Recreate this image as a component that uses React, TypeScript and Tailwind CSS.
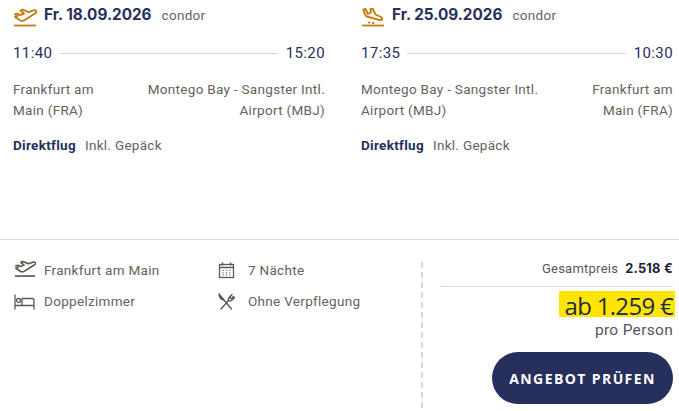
const PlaneUp = ({ className, strokeWidth = 1.5 }: { className: string; strokeWidth?: number }) => (
  <svg className={className} viewBox="0 0 24 24" fill="none" stroke="currentColor" strokeWidth={strokeWidth} strokeLinejoin="round" strokeLinecap="round">
    <path d="M2 6.500l2-.8 3 1.400 4-1.600-3.500-3 2.200-.8 6 2.400 4.800-1.700c1.600-.5 2.800.1 3 1 .2.900-.6 1.700-2 2.300L11 12.500c-1.700.6-3 .5-4-.2L2 9l2.500-1" />
    <path d="M1 17.500h22" strokeWidth={1.8} strokeLinecap="butt" />
  </svg>
);

const PlaneDown = ({ className }: { className: string }) => (
  <svg className={className} viewBox="0 0 24 24" fill="none" stroke="currentColor" strokeWidth={1.9} strokeLinejoin="round" strokeLinecap="round">
    <path d="M2.500 1.500l2-.5 2.500 5 3-1.500-.5-3.500 2-.5 3 6 4.500 2c1.500.7 2.500 2 2 3-.4.800-1.500.8-3 .4L6 8.500c-1-.3-1.500-.8-1.800-1.500L2.500 1.500z" />
    <path d="M1 17.500h22" strokeWidth={1.8} strokeLinecap="butt" />
    <path d="M8 14.500h.5M12 15h.5" />
  </svg>
);

const Calendar = () => (
  <svg className="h-[17px] w-[17px]" viewBox="0 0 17 17" fill="none" stroke="#5c5852" strokeWidth={1.3}>
    <rect x="1.500" y="2.500" width="14" height="13" />
    <path d="M1.500 5.500h14M4.500 .5v3M12.500 .5v3" strokeWidth={1.5} />
    <path d="M4.500 8.500h1.200M7.900 8.500h1.200M11.300 8.500h1.200M4.500 10.800h1.200M7.900 10.800h1.200M11.300 10.800h1.200M4.500 13h1.200M7.900 13h1.200M11.300 13h1.200" strokeWidth={1} />
  </svg>
);

const Bed = () => (
  <svg className="h-[16px] w-[21px]" viewBox="0 0 21 16" fill="none" stroke="#5c5852" strokeWidth={1.3}>
    <path d="M1 .5v15M1 11.500h19M20 15.500V6c0-1-.7-1.500-1.500-1.500H8v7" />
    <circle cx="4.500" cy="6.500" r="2" />
  </svg>
);

const Cutlery = () => (
  <svg className="h-[17px] w-[18px]" viewBox="0 0 18 17" fill="none" stroke="#5c5852" strokeWidth={1.4} strokeLinecap="round" strokeLinejoin="round">
    <path d="M1 1l12.500 15M1 1c0 3 2 5.500 5.500 6.500" />
    <path d="M3 16l7.500-8.500M10.500 7.500c-1-1.500.5-3 1.500-4l2-2M10.500 7.500c1.500 1 3 0 4-1l2-2M13 2.500L11.800 5M15.500 3.500l-2.300 2.300" />
  </svg>
);

function Leg({ date, icon, dep, arr, from, to }: { date: string; icon: React.ReactNode; dep: string; arr: string; from: string[]; to: string[] }) {
  return (
    <div className="flex-1">
      <div className="flex h-[30px] items-center">
        <div className="mt-[9px] w-[31px] text-[#c27c12]">{icon}</div>
        <span className="font-['Inter',sans-serif] text-[15.300px] font-bold text-[#27305c]">{date}</span>
        <span className="ml-[10px] text-[13.500px] tracking-[0.3px] text-[#66625c]">condor</span>
      </div>
      <div className="mt-[13px] flex h-[20px] items-center text-[15px] tracking-[0.4px] text-[#27305c]">
        <span>{dep}</span>
        <div className="ml-[7px] mr-[8px] h-px flex-1 bg-[#d8d8dc]" />
        <span>{arr}</span>
      </div>
      <div className="mt-[16px] flex justify-between text-[13.500px] leading-[21px] tracking-[0.3px] text-[#66625c]">
        <div>{from.map((l) => <div key={l}>{l}</div>)}</div>
        <div className="text-right">{to.map((l) => <div key={l}>{l}</div>)}</div>
      </div>
      <div className="mt-[14px] flex h-[20px] items-center text-[13.500px] tracking-[0.3px]">
        <span className="font-bold text-[#27305c]">Direktflug</span>
        <span className="ml-[9px] text-[#66625c]">Inkl. Gepäck</span>
      </div>
    </div>
  );
}

export default function App() {
  return (
    <div className="h-[411px] w-[679px] overflow-hidden bg-white font-['Roboto',sans-serif]">
      <div className="flex h-[239px] gap-[36px] pl-[13px] pr-[6px]">
        <Leg
          date="Fr. 18.09.2026"
          icon={<PlaneUp className="h-[24px] w-[24px]" strokeWidth={1.9} />}
          dep="11:40"
          arr="15:20"
          from={["Frankfurt am", "Main (FRA)"]}
          to={["Montego Bay - Sangster Intl.", "Airport (MBJ)"]}
        />
        <Leg
          date="Fr. 25.09.2026"
          icon={<PlaneDown className="h-[24px] w-[24px]" />}
          dep="17:35"
          arr="10:30"
          from={["Montego Bay - Sangster Intl.", "Airport (MBJ)"]}
          to={["Frankfurt am", "Main (FRA)"]}
        />
      </div>
      <div className="flex h-[172px] border-t border-[#dcdcdc] pl-[14px] pr-[6px]">
        <div className="mt-[15px] grid h-[62px] w-[407px] grid-cols-[204px_1fr] text-[13.500px] tracking-[0.3px] text-[#66625c]">
          {[
            [<PlaneUp key="p" className="h-[22px] w-[22px] text-[#5c5852]" strokeWidth={1.7} />, "Frankfurt am Main"],
            [<Calendar key="c" />, "7 Nächte"],
            [<Bed key="b" />, "Doppelzimmer"],
            [<Cutlery key="k" />, "Ohne Verpflegung"],
          ].map(([icon, label], i) => (
            <div key={i} className="flex h-[31px] items-center">
              <div className="flex w-[30px] items-center">{icon}</div>
              <span>{label}</span>
            </div>
          ))}
        </div>
        <div className="mt-[22px] h-[146px] border-l-2 border-dashed border-[#d8d8d8]" />
        <div className="ml-[18px] flex flex-1 flex-col items-end">
          <div className="mt-[20px] flex h-[18px] items-center text-[13px] tracking-[0.25px] text-[#55565f]">
            Gesamtpreis
            <span className="ml-[7px] font-['Inter',sans-serif] text-[12.800px] font-bold text-[#1e2233]">2.518 €</span>
          </div>
          <div className="mt-[8px] h-px w-full bg-[#dcdcdc]" />
          <div className="mr-[-2px] mt-[4px] flex h-[26px] items-end bg-[#ffe600] pl-[6px] pr-[2px] font-['Open_Sans',sans-serif] text-[24px] leading-[26px] tracking-[-0.7px] text-[#1f2a48]">
            <span className="translate-y-[2px]">ab 1.259 €</span>
          </div>
          <div className="text-[15.500px] leading-[26px] tracking-[0.3px] text-[#55565f]">pro Person</div>
          <button className="mt-[9px] h-[52px] w-[181px] rounded-[26px] bg-[#27305c] font-['Open_Sans',sans-serif] text-[14px] font-bold tracking-[1.400px] text-white">
            ANGEBOT PRÜFEN
          </button>
        </div>
      </div>
    </div>
  );
}
